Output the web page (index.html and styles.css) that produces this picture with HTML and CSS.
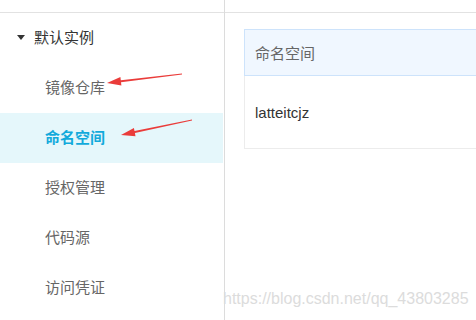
FILE: index.html
```html
<!DOCTYPE html>
<html lang="zh-CN">
<head>
<meta charset="UTF-8">
<meta name="viewport" content="width=device-width, initial-scale=1.0">
<title>命名空间</title>
<link rel="stylesheet" href="styles.css">
</head>
<body>
<div class="layout">
  <div class="sidebar">
    <div class="topbar"></div>
    <div class="menu-group">
      <span class="caret"></span>
      <span>默认实例</span>
    </div>
    <div class="menu-item">镜像仓库</div>
    <div class="menu-item active">命名空间</div>
    <div class="menu-item">授权管理</div>
    <div class="menu-item">代码源</div>
    <div class="menu-item">访问凭证</div>
  </div>
  <div class="main">
    <div class="topbar"></div>
    <div class="table">
      <div class="table-head">命名空间</div>
      <div class="table-row">latteitcjz</div>
    </div>
  </div>
</div>

<!-- annotation arrows drawn over the screenshot -->
<svg class="arrows" width="476" height="320" viewBox="0 0 476 320">
  <polygon points="182,73.5 120.8,80.3 120.4,77 107,83 121.4,85.6 121,82.3 182,74.5" fill="#ea3c3a"/>
  <polygon points="192,119.5 134.5,131.1 133.9,127.9 121,135 135.5,136.3 134.9,133.1 192,120.5" fill="#ea3c3a"/>
</svg>
<div class="watermark">https://blog.csdn.net/qq_43803285</div>
</body>
</html>
```

FILE: styles.css
```css
body {
  margin: 0;
  font-family: "Liberation Sans", "Noto Sans CJK SC", sans-serif;
  font-size: 15px;
  background-color: #fff;
  overflow: hidden;
}

.layout {
  display: flex;
  height: 100vh;
}

.topbar {
  height: 12px;
  border-bottom: 1px solid #e2e2e2;
}

.sidebar {
  width: 224px;
  flex-shrink: 0;
  border-right: 1px solid #dcdcdc;
}

.menu-group {
  display: flex;
  align-items: center;
  box-sizing: border-box;
  height: 50px;
  padding: 0 0 4px 17px;
  color: #333;
}

.caret {
  width: 0;
  height: 0;
  border-left: 4px solid transparent;
  border-right: 4px solid transparent;
  border-top: 5px solid #333;
  margin: 3px 9px 0 0;
}

.menu-item {
  display: flex;
  align-items: center;
  box-sizing: border-box;
  height: 50px;
  padding: 0 0 4px 45px;
  margin-right: 1px;
  color: #666;
}

.menu-item.active {
  background-color: #e5f7fb;
  color: #12aadb;
  font-weight: bold;
}

.main {
  flex: 1;
  overflow: hidden;
}

.table {
  width: 320px;
  margin: 16px 0 0 19px;
}

.table-head {
  display: flex;
  align-items: center;
  height: 45px;
  padding-left: 10px;
  background-color: #f0f7ff;
  border: 1px solid #cde3fb;
  color: #666;
}

.table-row {
  display: flex;
  align-items: center;
  height: 72px;
  padding-left: 10px;
  border-left: 1px solid #ececec;
  border-bottom: 1px solid #ececec;
  color: #333;
}

.arrows {
  position: absolute;
  left: 0;
  top: 0;
  pointer-events: none;
}

.watermark {
  position: absolute;
  left: 223px;
  top: 290px;
  font-family: "Liberation Sans", sans-serif;
  font-size: 16px;
  line-height: 18px;
  color: #dcdcdc;
}
```
